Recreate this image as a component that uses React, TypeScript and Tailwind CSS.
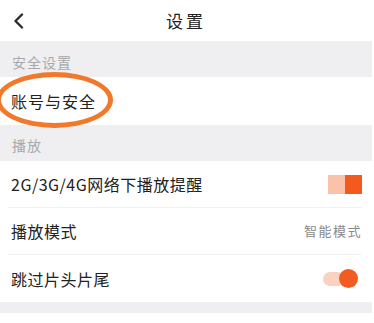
import React from "react";

const font = { fontFamily: '"Noto Sans CJK SC", "Noto Sans", sans-serif' };

function SectionHeader({ title, className }: { title: string; className: string }) {
  return (
    <div className={`flex items-center bg-[#efeff2] pl-[12px] text-[14px] tracking-[1px] text-[#a8a8a8] ${className}`}>
      {title}
    </div>
  );
}

function Row({ label, children, last }: { label: string; children?: React.ReactNode; last?: boolean }) {
  return (
    <div className="bg-white pl-[8px]">
      <div
        className={`flex h-[47px] items-center justify-between pl-[3px] text-[16px] tracking-[0.5px] text-[#222] ${
          last ? "" : "border-b border-[#f0f0f0]"
        }`}
      >
        <span>{label}</span>
        {children}
      </div>
    </div>
  );
}

export default function App() {
  return (
    <div className="relative w-[372px] overflow-hidden bg-white" style={font}>
      {/* header */}
      <div className="grid h-[41px] grid-cols-[1fr_auto_1fr] items-center bg-white">
        <div className="pl-[13px]">
          <svg width="11" height="16" viewBox="0 0 11 16" fill="none">
            <path d="M9 1.5L2.5 8L9 14.5" stroke="#2d2d2d" strokeWidth="2.4" strokeLinecap="round" strokeLinejoin="round" />
          </svg>
        </div>
        <div className="text-[17px] tracking-[3px] text-[#222]">设置</div>
        <div />
      </div>

      <SectionHeader title="安全设置" className="h-[36px] pt-[6px]" />
      <div className="flex h-[48px] items-center bg-white pl-[11px] text-[16px] tracking-[1px] text-[#222]">
        账号与安全
      </div>

      <SectionHeader title="播放" className="h-[36px] pt-[4px]" />
      <div className="pr-[10px] bg-white">
        <Row label="2G/3G/4G网络下播放提醒">
          <div className="flex h-[19px]">
            <div className="w-[17px] bg-[#f9c2ab]" />
            <div className="w-[17px] bg-[#f35a1e]" />
          </div>
        </Row>
        <Row label="播放模式">
          <span className="text-[13px] tracking-[1.5px] text-[#8a8a8a]">智能模式</span>
        </Row>
        <Row label="跳过片头片尾" last>
          <div className="mr-[4px] flex items-center">
            <div className="h-[14px] w-[22px] rounded-full bg-[#fbd2c1]" />
            <div className="-ml-[6px] h-[19px] w-[19px] rounded-full bg-[#f25c22]" />
          </div>
        </Row>
      </div>
      <div className="h-[11px] bg-[#efeff2]" />
      <div className="h-[12px] bg-white" />

      {/* hand-drawn highlight annotation */}
      <div className="pointer-events-none absolute left-[-4px] top-[72px] h-[56px] w-[117px] rounded-[50%] border-[5px] border-[#f2782c]" />
    </div>
  );
}
